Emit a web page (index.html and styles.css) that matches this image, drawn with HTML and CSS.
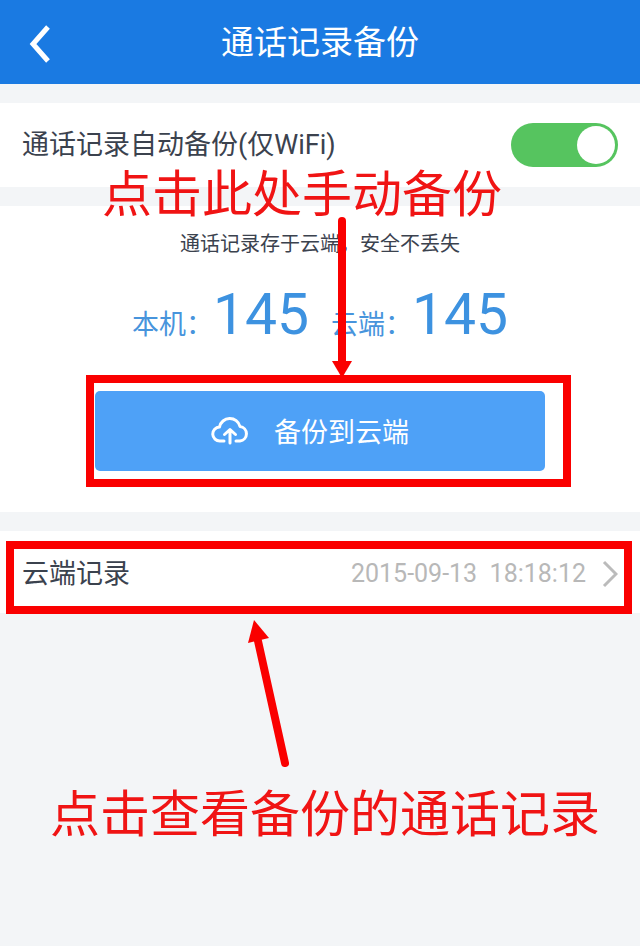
FILE: index.html
```
<!DOCTYPE html>
<html lang="zh-CN">
<head>
  <meta charset="UTF-8" />
  <meta name="viewport" content="width=device-width, initial-scale=1.0"/>
  <title>通话记录备份</title>
  <link rel="stylesheet" href="styles.css">
</head>
<body>
  <header class="topbar">
    <button class="back-btn" aria-label="返回">
      <svg width="24" height="40" viewBox="0 0 24 40"><path d="M20 4 L5 21 L20 38" fill="none" stroke="#fff" stroke-width="5"/></svg>
    </button>
    <h1>通话记录备份</h1>
  </header>

  <main>
    <section class="row auto-backup">
      <label for="auto-backup">通话记录自动备份(仅WiFi)</label>
      <input type="checkbox" id="auto-backup" class="switch" checked>
    </section>

    <section class="backup-panel">
      <p class="hint">通话记录存于云端，安全不丢失</p>
      <div class="counts">
        <p>本机：<span class="number">145</span></p>
        <p>云端：<span class="number">145</span></p>
      </div>
      <div class="backup-action">
        <button class="backup-btn">
          <svg width="38" height="30" viewBox="0 0 38 30" fill="none" stroke="#fff" stroke-width="3" stroke-linecap="round" stroke-linejoin="round">
            <path d="M13 26 H9 A7 7 0 0 1 8.500 12 A10.500 10.500 0 0 1 29 11.500 A7.300 7.300 0 0 1 29 26 H25"/>
            <path d="M19 28 V15 M13.500 19.500 L19 14.500 L24.500 19.500"/>
          </svg>
          备份到云端
        </button>
        <div class="mark mark-button"></div>
        <svg class="arrow-down" width="24" height="166" viewBox="0 0 24 166">
          <path d="M12 9 V150" stroke="#fa0000" stroke-width="8" stroke-linecap="round"/>
          <path d="M2 149 H22 L12 166 Z" fill="#fa0000"/>
        </svg>
      </div>
      <p class="note note-backup">点击此处手动备份</p>
    </section>

    <section class="records">
      <a href="#" class="row record-link">
        <span>云端记录</span>
        <time class="record-time" datetime="2015-09-13T18:18:12">2015-09-13  18:18:12</time>
        <svg width="16" height="28" viewBox="0 0 16 28"><path d="M2 2 L14 14 L2 26" fill="none" stroke="#bbb" stroke-width="3"/></svg>
      </a>
      <div class="mark mark-records"></div>
    </section>
  </main>

  <aside class="guide">
    <svg class="arrow-up" width="50" height="150" viewBox="0 0 50 150">
      <path d="M39 144 L12 22" stroke="#fa0000" stroke-width="8" stroke-linecap="round"/>
      <path d="M8 1 L23 19 L2 24 Z" fill="#fa0000"/>
    </svg>
    <p class="note">点击查看备份的通话记录</p>
  </aside>
</body>
</html>
```
FILE: styles.css
```
* {
  box-sizing: border-box;
}

body {
  font-family: Roboto, "Noto Sans CJK SC", sans-serif;
  background-color: #f3f5f7;
  color: #3b424e;
  margin: 0;
  min-height: 100vh;
}

h1, p {
  margin: 0;
  font-weight: normal;
}

button {
  border: none;
  font-family: inherit;
  color: #fff;
  cursor: pointer;
}

.topbar {
  display: grid;
  grid-template-columns: 52px 1fr 52px;
  align-items: center;
  height: 84px;
  padding-top: 2px;
  background-color: #1a7ae2;
  color: #fff;
}

.topbar h1 {
  font-size: 33px;
  line-height: 48px;
  text-align: center;
}

.back-btn {
  display: flex;
  justify-content: flex-end;
  padding: 0;
  background: none;
}

main {
  display: flex;
  flex-direction: column;
  gap: 19px;
  padding-top: 19px;
}

.row {
  display: flex;
  align-items: center;
  padding: 0 22px;
  background-color: #fff;
  font-size: 27px;
  line-height: 40px;
}

.auto-backup {
  justify-content: space-between;
  min-height: 84px;
}

.switch {
  appearance: none;
  display: flex;
  justify-content: flex-end;
  width: 107px;
  height: 44px;
  margin: 0;
  padding: 3px;
  border-radius: 22px;
  background-color: #56c45f;
  cursor: pointer;
}

.switch::before {
  content: "";
  width: 38px;
  height: 38px;
  border-radius: 50%;
  background-color: #fff;
}

.switch:not(:checked) {
  justify-content: flex-start;
  background-color: #ccc;
}

.backup-panel {
  position: relative;
  padding: 24px 95px 41px;
  background-color: #fff;
}

.hint {
  font-size: 20px;
  line-height: 28px;
  text-align: center;
}

.counts {
  display: flex;
  justify-content: center;
  gap: 22px;
  padding: 17px 0 26px;
  color: #4794dc;
  font-size: 27px;
  line-height: 80px;
  white-space: nowrap;
}

.number {
  font-size: 57px;
  color: #3d92e0;
}

.backup-action {
  position: relative;
}

.backup-btn {
  display: flex;
  justify-content: center;
  align-items: center;
  gap: 25px;
  width: 100%;
  height: 80px;
  padding: 0 20px 2px 0;
  border-radius: 5px;
  background-color: #4ea1f7;
  font-size: 27px;
}

.record-link {
  min-height: 82px;
  gap: 16px;
  padding-top: 4px;
  color: inherit;
  text-decoration: none;
}

.record-time {
  margin-left: auto;
  color: #b8b8b8;
  font-size: 25px;
  white-space: pre;
}

.records {
  position: relative;
}

/* red guide marks drawn over the screen */
.mark {
  position: absolute;
  border: 8px solid #fa0000;
  pointer-events: none;
}

.mark-button {
  inset: -16px -26px -16px -9px;
}

.mark-records {
  top: 10px;
  right: 8px;
  left: 6px;
  height: 73px;
}

.arrow-down {
  position: absolute;
  left: 235px;
  bottom: 93px;
  pointer-events: none;
}

.note {
  color: #f01414;
  font-size: 50px;
  line-height: 60px;
  white-space: nowrap;
}

.note-backup {
  position: absolute;
  top: -41px;
  left: 102px;
  pointer-events: none;
}

.guide {
  padding: 6px 0 0 50px;
}

.arrow-up {
  display: block;
  margin: 0 0 16px 196px;
}
```
